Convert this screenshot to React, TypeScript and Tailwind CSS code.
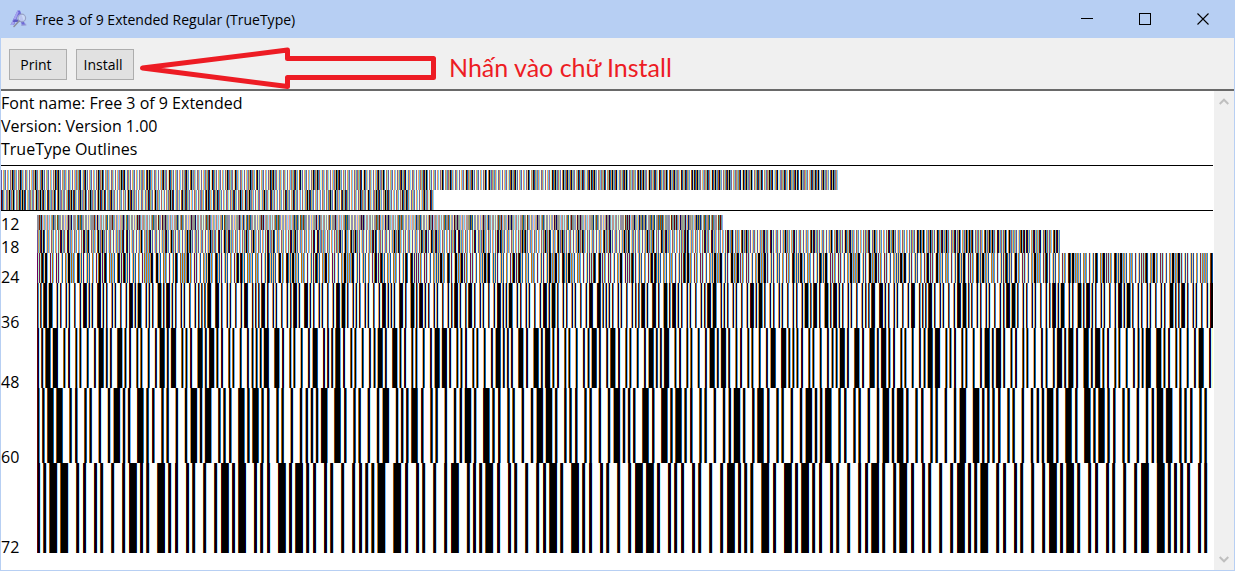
import { useMemo } from "react";

// Code 39 symbols: nine elements (bar, space, bar, ...), 1 = wide, 0 = narrow.
const CODE39: Record<string, string> = {
  "0": "000110100", "1": "100100001", "2": "001100001", "3": "101100000", "4": "000110001",
  "5": "100110000", "6": "001110000", "7": "000100101", "8": "100100100", "9": "001100100",
  A: "100001001", B: "001001001", C: "101001000", D: "000011001", E: "100011000",
  F: "001011000", G: "000001101", H: "100001100", I: "001001100", J: "000011100",
  K: "100000011", L: "001000011", M: "101000010", N: "000010011", O: "100010010",
  P: "001010010", Q: "000000111", R: "100000110", S: "001000110", T: "000010110",
  U: "110000001", V: "011000001", W: "111000000", X: "010010001", Y: "110010000",
  Z: "011010000", "-": "010000101", ".": "110000100", " ": "011000100", "*": "010010100",
  $: "010101000", "/": "010100010", "+": "010001010", "%": "000101010",
};

// Extended set: characters that are written as a shift symbol and a letter.
const SHIFTED: Record<string, string> = {
  ":": "/Z", ",": "/L", ";": "%F", "'": "/G", '"': "/B", "(": "/H",
  "!": "/A", "?": "%M", ")": "/I", "+": "/K", "/": "/O", "=": "%H",
};

function encode(ch: string): string {
  if (ch >= "a" && ch <= "z") return "+" + ch.toUpperCase();
  return SHIFTED[ch] ?? ch;
}

type Run = { x: number; width: number; fill: string };

// Rasterises the bars at three samples per pixel, one for each colour channel.
function rasterise(text: string, single: number, double: number) {
  const bars: [number, number][] = [];
  let pen = 0;
  for (const ch of text) {
    const symbols = encode(ch);
    const advance = symbols.length === 2 ? double / 2 : single;
    for (const symbol of symbols) {
      let x = pen;
      [...CODE39[symbol]].forEach((bit, i) => {
        const w = bit === "1" ? advance * 0.172 : advance / 15;
        if (i % 2 === 0) bars.push([x, x + w]);
        x += w;
      });
      pen += advance;
    }
  }
  const width = Math.ceil(pen);
  const ink = new Float64Array(width * 3);
  for (const [from, to] of bars) {
    const a = from * 3;
    const b = to * 3;
    for (let s = Math.floor(a); s < b && s < ink.length; s++) {
      ink[s] += Math.max(0, Math.min(b, s + 1) - Math.max(a, s));
    }
  }
  const level = (s: number) => {
    const sum = (ink[s - 1] ?? 0) + ink[s] + (ink[s + 1] ?? 0);
    return Math.round(255 * Math.pow(Math.max(0, 1 - sum / 3), 0.8));
  };
  const runs: Run[] = [];
  for (let x = 0; x < width; x++) {
    const fill = `rgb(${level(x * 3)},${level(x * 3 + 1)},${level(x * 3 + 2)})`;
    const last = runs[runs.length - 1];
    if (last && last.fill === fill) last.width += 1;
    else runs.push({ x, width: 1, fill });
  }
  return { width, runs };
}

type BarcodeProps = { text: string; single: number; double: number; height: number };

function Barcode({ text, single, double, height }: BarcodeProps) {
  const { width, runs } = useMemo(() => rasterise(text, single, double), [text, single, double]);
  return (
    <svg width={width} height={height} className="block shrink-0" shapeRendering="crispEdges" role="img" aria-label={text}>
      {runs.map((r) => (
        <rect key={r.x} x={r.x} y={0} width={r.width} height={height} fill={r.fill} />
      ))}
    </svg>
  );
}

const LETTERS = "abcdefghijklmnopqrstuvwxyz ABCDEFGHIJKLMNOPQRSTUVWXYZ";
const SYMBOLS = "1234567890.:,; ' \" (!?) +-*/=";
const PANGRAM = "The quick brown fox jumps over the lazy dog. 1234567890";

const SAMPLES = [
  { size: 12, height: 15, single: 7.85, double: 15.33 },
  { size: 18, height: 23, single: 11.5, double: 23 },
  { size: 24, height: 30, single: 15.33, double: 30.67 },
  { size: 36, height: 45, single: 23, double: 46 },
  { size: 48, height: 60, single: 31, double: 61 },
  { size: 60, height: 75, single: 38, double: 77 },
  { size: 72, height: 90, single: 46, double: 92 },
];

function FontIcon() {
  return (
    <svg width="20" height="20" viewBox="0 0 20 20" aria-hidden="true">
      <path d="M12 15.500 L17 14.500 L17.500 16.500 L12.500 17 Z" fill="#9aa0d8" />
      <path d="M1.500 16 L8.500 1.500 L11 1.500 L16 15.500 L12.800 15.500 L9.300 6 L5 16 Z" fill="#6f6ad8" />
      <path d="M1.500 16 L8.500 1.500 L9.500 3.500 L4.500 16 Z" fill="#a5a2ee" />
      <path d="M4.500 10.500 H12 V13 H4 Z" fill="#5d59c4" />
      <circle cx="12.800" cy="9" r="3.800" fill="#cfdcf6" fillOpacity="0.8" stroke="#98a2c6" strokeWidth="1.2" />
      <path d="M10 12 L5 17.500" stroke="#8d8fa0" strokeWidth="1.600" strokeLinecap="round" />
    </svg>
  );
}

const toolButton =
  "mt-[3px] h-[31px] w-[58px] border border-[#adadad] bg-[#e1e1e1] pr-1 text-sm leading-5 text-black";
const captionButton = "flex h-full w-[58px] items-center justify-center";

export default function App() {
  return (
    <div className="flex min-h-screen flex-col bg-[#b7cff3] px-px pb-px font-['Open_Sans','Noto_Sans',sans-serif] text-black">
      <header className="flex h-[38px] items-center pl-2">
        <FontIcon />
        <h1 className="ml-1.5 flex-1 pt-0.5 text-sm leading-5">Free 3 of 9 Extended Regular (TrueType)</h1>
        <div className="flex h-full pr-0.5">
          <button type="button" aria-label="Minimize" className={captionButton}>
            <svg width="12" height="12" shapeRendering="crispEdges">
              <path d="M0 5.5H12" stroke="#000" />
            </svg>
          </button>
          <button type="button" aria-label="Maximize" className={captionButton}>
            <svg width="12" height="12" shapeRendering="crispEdges">
              <rect x="0.5" y="0.5" width="11" height="11" fill="none" stroke="#000" />
            </svg>
          </button>
          <button type="button" aria-label="Close" className={captionButton}>
            <svg width="12" height="12">
              <path d="M0.5 0.5L11.5 11.5M11.5 0.5L0.5 11.5" stroke="#000" strokeWidth="1.1" />
            </svg>
          </button>
        </div>
      </header>

      <div className="flex h-[53px] items-start border-b-2 border-[#696969] bg-[#f0f0f0] pt-2 pl-2">
        <button type="button" className={toolButton}>Print</button>
        <button type="button" className={`ml-[9px] ${toolButton}`}>Install</button>
        <svg width="298" height="43" viewBox="139 46 298 43" className="ml-[5px] shrink-0" aria-hidden="true">
          <path
            d="M142.500 68L287.500 50V58.500H433.500V77.500H287.500V86.500Z"
            fill="none"
            stroke="#ed1c24"
            strokeWidth="5"
            strokeLinejoin="round"
          />
        </svg>
        <p className="ml-3 whitespace-nowrap font-['Lato','Open_Sans',sans-serif] text-[25px] leading-[43px] text-[#ed1c24]">
          Nhấn vào chữ Install
        </p>
      </div>

      <div className="flex flex-1">
        <main className="w-0 flex-1 bg-white pr-px">
          <div className="pt-px pb-1 text-base leading-[23px]">
            <p>Font name: Free 3 of 9 Extended</p>
            <p>Version: Version 1.00</p>
            <p>TrueType Outlines</p>
          </div>
          <div className="overflow-hidden border-y border-black pt-1">
            <Barcode text={LETTERS} single={10.3} double={21.5} height={20} />
            <Barcode text={SYMBOLS} single={10.3} double={21.5} height={20} />
          </div>
          <ul className="pt-1">
            {SAMPLES.map((s) => (
              <li key={s.size} className="flex items-end">
                <span className="flex h-3 w-9 shrink-0 items-center text-base leading-none">{s.size}</span>
                <div className="w-0 flex-1 overflow-hidden">
                  <Barcode text={PANGRAM} single={s.single} double={s.double} height={s.height} />
                </div>
              </li>
            ))}
          </ul>
        </main>
        <div className="flex w-5 flex-col items-center justify-between bg-[#f0f0f0] py-[7px]">
          <svg width="10" height="8" viewBox="0 0 10 8" aria-hidden="true">
            <path d="M0.700 6L5 1.700L9.300 6" fill="none" stroke="#bfbfbf" strokeWidth="2" />
          </svg>
          <svg width="10" height="8" viewBox="0 0 10 8" aria-hidden="true">
            <path d="M0.700 2L5 6.300L9.300 2" fill="none" stroke="#bfbfbf" strokeWidth="2" />
          </svg>
        </div>
      </div>
    </div>
  );
}
